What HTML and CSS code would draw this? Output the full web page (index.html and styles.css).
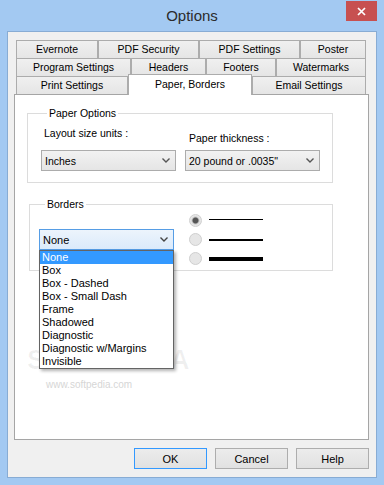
FILE: index.html
```html
<!DOCTYPE html>
<html lang="en">
<head>
    <meta charset="UTF-8">
    <meta name="viewport" content="width=device-width, initial-scale=1.0">
    <title>Options</title>
    <link rel="stylesheet" href="styles.css">
</head>
<body>

    <div class="window">
        <div class="titlebar">
            <span></span>
            <span class="title">Options</span>
            <div class="close">
                <svg width="9" height="9" viewBox="0 0 9 9"><path d="M1 1 L8 8 M8 1 L1 8" stroke="#fff" stroke-width="1.7"/></svg>
            </div>
        </div>

        <div class="dialog">
            <div class="tabs">
                <div class="tab-row row1">
                    <div class="tab">Evernote</div>
                    <div class="tab">PDF Security</div>
                    <div class="tab">PDF Settings</div>
                    <div class="tab">Poster</div>
                </div>
                <div class="tab-row row2">
                    <div class="tab">Program Settings</div>
                    <div class="tab">Headers</div>
                    <div class="tab">Footers</div>
                    <div class="tab">Watermarks</div>
                </div>
                <div class="tab-row row3">
                    <div class="tab tab-print">Print Settings</div>
                    <div class="tab tab-active">Paper, Borders</div>
                    <div class="tab tab-email">Email Settings</div>
                </div>
            </div>

            <div class="page">
                <fieldset class="group group-paper">
                    <legend>Paper Options</legend>
                    <div class="paper-cols">
                        <div class="paper-col">
                            <div class="field-label label-units">Layout size units :</div>
                            <div class="select">
                                <span>Inches</span>
                                <svg class="chevron" width="8" height="5" viewBox="0 0 8 5"><path d="M0.5 0.5 L4 4 L7.5 0.5" fill="none" stroke="#555" stroke-width="1.4"/></svg>
                            </div>
                        </div>
                        <div class="paper-col">
                            <div class="field-label label-thickness">Paper thickness :</div>
                            <div class="select">
                                <span>20 pound or .0035"</span>
                                <svg class="chevron" width="8" height="5" viewBox="0 0 8 5"><path d="M0.5 0.5 L4 4 L7.5 0.5" fill="none" stroke="#555" stroke-width="1.4"/></svg>
                            </div>
                        </div>
                    </div>
                </fieldset>

                <fieldset class="group group-borders">
                    <legend>Borders</legend>
                    <div class="borders-row">
                        <div class="combo-wrap">
                            <div class="select select-focus">
                                <span>None</span>
                                <svg class="chevron" width="8" height="5" viewBox="0 0 8 5"><path d="M0.5 0.5 L4 4 L7.5 0.5" fill="none" stroke="#444" stroke-width="1.4"/></svg>
                            </div>
                            <ul class="droplist">
                                <li class="selected">None</li>
                                <li>Box</li>
                                <li>Box - Dashed</li>
                                <li>Box - Small Dash</li>
                                <li>Frame</li>
                                <li>Shadowed</li>
                                <li>Diagnostic</li>
                                <li>Diagnostic w/Margins</li>
                                <li>Invisible</li>
                            </ul>
                        </div>
                        <div class="widths">
                            <div class="width-row">
                                <span class="radio checked"></span>
                                <span class="line line-thin"></span>
                            </div>
                            <div class="width-row">
                                <span class="radio"></span>
                                <span class="line line-mid"></span>
                            </div>
                            <div class="width-row">
                                <span class="radio"></span>
                                <span class="line line-thick"></span>
                            </div>
                        </div>
                    </div>
                </fieldset>

                <div class="mark-big">SOFTPEDIA</div>
                <div class="mark-small">www.softpedia.com</div>
            </div>

            <div class="buttons">
                <button type="button" class="btn btn-default">OK</button>
                <button type="button" class="btn">Cancel</button>
                <button type="button" class="btn">Help</button>
            </div>
        </div>
    </div>

</body>
</html>
```

FILE: styles.css
```css
body {
    margin: 0;
    font-family: "Liberation Sans", Arial, sans-serif;
    font-size: 10.5px;
    color: #000;
}
.window {
    width: 384px;
    height: 485px;
    background-color: #a3c9f2;
    box-sizing: border-box;
}
.titlebar {
    height: 31px;
    display: grid;
    grid-template-columns: 1fr auto 1fr;
    padding: 0 7px;
}
.title {
    font-size: 15px;
    line-height: 31px;
    color: #2b2b2b;
}
.close {
    justify-self: end;
    margin-top: 1px;
    width: 31px;
    height: 20px;
    background-color: #c75050;
    display: flex;
    align-items: center;
    justify-content: center;
}
.dialog {
    margin: 0 7px;
    height: 447px;
    box-sizing: border-box;
    border: 1px solid #88acd4;
    background-color: #f0f0f0;
    padding: 8px 7px 8px 6px;
}
.tabs {
    margin: 0 3px 0 2px;
}
.tab-row {
    height: 18px;
    display: grid;
}
.row1 {
    grid-template-columns: 82px 101px 101px 66px;
}
.row2 {
    grid-template-columns: 115px 75px 70px 90px;
}
.row3 {
    display: flex;
    align-items: flex-end;
}
.tab {
    box-sizing: border-box;
    height: 18px;
    border: 1px solid #acacac;
    border-bottom: none;
    background: linear-gradient(#f0f0f0, #e5e5e5);
    text-align: center;
    line-height: 17px;
    white-space: nowrap;
}
.tab-print {
    width: 112px;
}
.tab-email {
    width: 114px;
}
.tab-active {
    width: 124px;
    height: 21px;
    margin-bottom: -1px;
    background: #fff;
    line-height: 19px;
    position: relative;
    z-index: 1;
}
.page {
    height: 346px;
    box-sizing: border-box;
    border: 1px solid #a5a5a5;
    background-color: #fff;
    position: relative;
    padding-top: 12px;
}
.group {
    margin: 0;
    padding: 0;
    border: 1px solid #dcdcdc;
    min-width: 0;
}
.group legend {
    margin-left: 6px;
    padding: 0 2px;
    line-height: 13px;
}
.group-paper {
    margin-left: 12px;
    width: 306px;
    box-sizing: border-box;
    padding: 0 0 11px 13px;
}
.paper-cols {
    display: flex;
    gap: 9px;
}
.paper-col {
    width: 135px;
    display: flex;
    flex-direction: column;
}
.paper-col .select {
    margin-top: auto;
}
.field-label {
    line-height: 13px;
}
.label-units {
    margin: 7px 0 10px 3px;
}
.label-thickness {
    margin: 12px 0 5px 4px;
}
.select {
    height: 21px;
    box-sizing: border-box;
    border: 1px solid #acacac;
    background: linear-gradient(#f2f2f2, #e5e5e5);
    display: flex;
    align-items: center;
    justify-content: space-between;
    padding: 0 5px 0 3px;
    white-space: nowrap;
}
.select-focus {
    border-color: #569de5;
    background: linear-gradient(#ecf4fc, #dbeafb);
    font-size: 11px;
}
.group-borders {
    margin: 15px 0 0 14px;
    width: 304px;
    box-sizing: border-box;
    padding: 0 0 2px 9px;
}
.borders-row {
    display: flex;
    align-items: flex-start;
    gap: 15px;
}
.combo-wrap {
    width: 135px;
    margin-top: 18px;
    position: relative;
}
.droplist {
    position: absolute;
    top: 100%;
    left: 0;
    width: 135px;
    box-sizing: border-box;
    margin: 0;
    padding: 0;
    list-style: none;
    background-color: #fff;
    border: 1px solid #646464;
    box-shadow: 2px 2px 3px rgba(0, 0, 0, 0.3);
    z-index: 3;
}
.droplist li {
    height: 13px;
    line-height: 13px;
    padding-left: 2px;
    font-size: 11px;
    white-space: nowrap;
}
.droplist li.selected {
    background-color: #3399ff;
    color: #fff;
}
.widths {
    display: flex;
    flex-direction: column;
}
.width-row {
    height: 19px;
    display: flex;
    align-items: center;
    gap: 7px;
}
.radio {
    width: 13px;
    height: 13px;
    box-sizing: border-box;
    border-radius: 50%;
    border: 1px solid #cfcfcf;
    background-color: #e6e6e6;
}
.radio.checked {
    background: radial-gradient(circle, #555 0, #555 2.5px, #c8c8c8 3.5px, #e6e6e6 4.5px);
}
.line {
    width: 54px;
    background-color: #000;
}
.line-thin {
    height: 1px;
    margin-top: -3px;
}
.line-mid {
    height: 2px;
}
.line-thick {
    height: 4px;
}
.mark-big {
    position: absolute;
    left: 12px;
    top: 250px;
    font-size: 27px;
    font-weight: bold;
    letter-spacing: 1px;
    color: rgba(0, 0, 0, 0.06);
    z-index: 2;
}
.mark-small {
    position: absolute;
    left: 31px;
    top: 284px;
    font-size: 10px;
    color: #d6d6d6;
}
.buttons {
    margin-top: 8px;
    display: flex;
    justify-content: flex-end;
    gap: 8px;
}
.btn {
    width: 73px;
    height: 21px;
    box-sizing: border-box;
    border: 1px solid #adadad;
    background: linear-gradient(#ececec, #e1e1e1);
    font-family: "Liberation Sans", Arial, sans-serif;
    font-size: 11px;
    color: #000;
    padding: 0;
}
.btn-default {
    border-color: #3399ff;
}
```
